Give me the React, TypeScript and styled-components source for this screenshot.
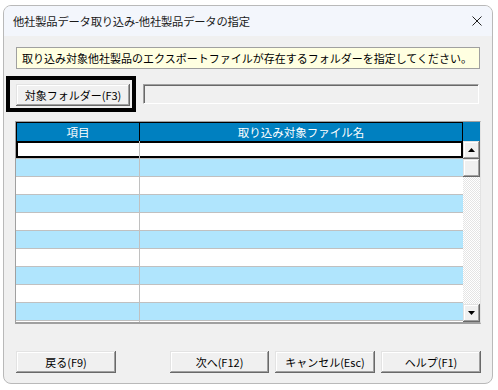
import { FC } from 'react'
import styled, { createGlobalStyle } from 'styled-components'

const GlobalStyle = createGlobalStyle`
    html, body {
        margin: 0;
        padding: 0;
        background: #ffffff;
    }
    body {
        font-family: "Noto Sans CJK JP", "Noto Sans", sans-serif;
        font-size: 11px;
        color: #000;
    }
`;

const Window = styled.div`
    box-sizing: border-box;
    width: 490px;
    height: 379px;
    margin: 5px 0 0 3px;
    border: 1px solid #b9b9b9;
    border-radius: 8px;
    overflow: hidden;
    background: #f0f0f0;
    display: flex;
    flex-direction: column;
`;

const TitleBar = styled.div`
    height: 30px;
    flex: none;
    display: flex;
    align-items: center;
    justify-content: space-between;
    padding: 0 10px 0 9px;
    background: #f3f6fc;
`;

const TitleText = styled.span`
    font-size: 11.3px;
    letter-spacing: -0.2px;
    color: #1a1a1a;
`;

const Body = styled.div`
    flex: 1;
    display: flex;
    flex-direction: column;
`;

const Notice = styled.div`
    box-sizing: border-box;
    width: 464px;
    height: 22px;
    margin: 11px 0 0 12px;
    padding-left: 5px;
    display: flex;
    align-items: center;
    background: #ffffe1;
    border: 1px solid #a0a0a0;
    white-space: nowrap;
`;

const FolderRow = styled.div`
    display: flex;
    align-items: center;
    margin: 7px 0 0 2px;
`;

const FocusFrame = styled.div`
    box-sizing: border-box;
    width: 130px;
    height: 36px;
    border: 4px solid #000;
    display: flex;
    align-items: center;
    padding: 1px 0 0 6px;
`;

const Button = styled.button<{ $width: number }>`
    box-sizing: border-box;
    width: ${p => p.$width}px;
    height: 22px;
    padding: 0;
    margin: 0;
    border: none;
    background: #f0f0f0;
    font-family: inherit;
    font-size: 11px;
    color: #000;
    box-shadow: inset -1px -1px #696969, inset 1px 1px #e3e3e3,
        inset -2px -2px #a0a0a0, inset 2px 2px #ffffff;
    display: flex;
    align-items: center;
    justify-content: center;
    white-space: nowrap;
`;

const PathField = styled.div`
    box-sizing: border-box;
    width: 336px;
    height: 20px;
    margin-left: 7px;
    background: #f0f0f0;
    border-top: 1px solid #a0a0a0;
    border-left: 1px solid #a0a0a0;
    border-right: 1px solid #ffffff;
    border-bottom: 1px solid #ffffff;
    box-shadow: inset 1px 1px #696969;
`;

const Table = styled.div`
    box-sizing: border-box;
    width: 466px;
    height: 203px;
    margin: 9px 0 0 11px;
    border-top: 1px solid #a0a0a0;
    border-left: 1px solid #a0a0a0;
    border-right: 1px solid #e3e3e3;
    border-bottom: 2px solid #a0a0a0;
    display: flex;
    overflow: hidden;
    background: #ffffff;
`;

const GridArea = styled.div`
    width: 447px;
    display: flex;
    flex-direction: column;
`;

const HeaderRow = styled.div`
    box-sizing: border-box;
    height: 19px;
    flex: none;
    display: grid;
    grid-template-columns: 123px 1fr;
    background: #0080c0;
    border: 1px solid #000;
    border-bottom: none;
`;

const HeaderCell = styled.div<{ $last?: boolean }>`
    display: flex;
    align-items: center;
    justify-content: center;
    color: #ffffff;
    font-size: 11.5px;
    border-right: ${p => (p.$last ? 'none' : '1px solid #000')};
`;

const Row = styled.div<{ $alt: boolean; $selected?: boolean }>`
    box-sizing: border-box;
    height: 18px;
    flex: none;
    display: grid;
    grid-template-columns: 124px 1fr;
    background: ${p => (p.$alt ? '#b0e5fd' : '#ffffff')};
    border-bottom: 1px solid #c0c0c0;
    box-shadow: ${p => (p.$selected ? 'inset 0 0 0 2px #000' : 'none')};
`;

const Cell = styled.div`
    border-right: 1px solid #c0c0c0;
`;

const ScrollColumn = styled.div`
    width: 17px;
    display: flex;
    flex-direction: column;
`;

const ScrollHead = styled.div`
    height: 19px;
    flex: none;
    background: #0080c0;
`;

const ScrollButton = styled.div`
    box-sizing: border-box;
    height: 18px;
    flex: none;
    background: #f0f0f0;
    box-shadow: inset -1px -1px #696969, inset 1px 1px #e3e3e3,
        inset -2px -2px #a0a0a0, inset 2px 2px #ffffff;
    display: flex;
    align-items: center;
    justify-content: center;
`;

const Track = styled.div`
    flex: 1;
    background: repeating-conic-gradient(#ffffff 0 25%, #e4e4e4 0 50%) 0 0 / 2px 2px;
`;

const Footer = styled.div`
    display: flex;
    align-items: center;
    margin: 27px 0 0 12px;
    width: 465px;
`;

const Spacer = styled.div`
    flex: 1;
`;

const ButtonGroup = styled.div`
    display: flex;
    gap: 6px;
`;

const Arrow: FC<{ down?: boolean }> = ({ down }) => (
    <svg width="7" height="4" viewBox="0 0 7 4">
        {down
            ? <polygon points="0,0 7,0 3.5,4" fill="#000" />
            : <polygon points="0,4 7,4 3.5,0" fill="#000" />}
    </svg>
)

const rows = Array.from({ length: 11 }, (_, i) => i);

const App: FC = () => {
    return (
        <>
            <GlobalStyle />
            <Window>
                <TitleBar>
                    <TitleText>他社製品データ取り込み-他社製品データの指定</TitleText>
                    <svg width="10" height="10" viewBox="0 0 10 10">
                        <path d="M0.5 0.5 L9.5 9.5 M9.5 0.5 L0.5 9.5" stroke="#222" strokeWidth="1" />
                    </svg>
                </TitleBar>
                <Body>
                    <Notice>取り込み対象他社製品のエクスポートファイルが存在するフォルダーを指定してください。</Notice>
                    <FolderRow>
                        <FocusFrame>
                            <Button $width={114}>対象フォルダー(F3)</Button>
                        </FocusFrame>
                        <PathField />
                    </FolderRow>
                    <Table>
                        <GridArea>
                            <HeaderRow>
                                <HeaderCell>項目</HeaderCell>
                                <HeaderCell $last>取り込み対象ファイル名</HeaderCell>
                            </HeaderRow>
                            {
                                rows.map((index: number) =>
                                    <Row key={ index } $alt={ index % 2 === 1 } $selected={ index === 0 }>
                                        <Cell />
                                        <div />
                                    </Row>
                                )
                            }
                        </GridArea>
                        <ScrollColumn>
                            <ScrollHead />
                            <ScrollButton><Arrow /></ScrollButton>
                            <ScrollButton />
                            <Track />
                            <ScrollButton><Arrow down /></ScrollButton>
                        </ScrollColumn>
                    </Table>
                    <Footer>
                        <Button $width={100}>戻る(F9)</Button>
                        <Spacer />
                        <ButtonGroup>
                            <Button $width={99}>次へ(F12)</Button>
                            <Button $width={100}>キャンセル(Esc)</Button>
                            <Button $width={100}>ヘルプ(F1)</Button>
                        </ButtonGroup>
                    </Footer>
                </Body>
            </Window>
        </>
    )
}

export default App;
